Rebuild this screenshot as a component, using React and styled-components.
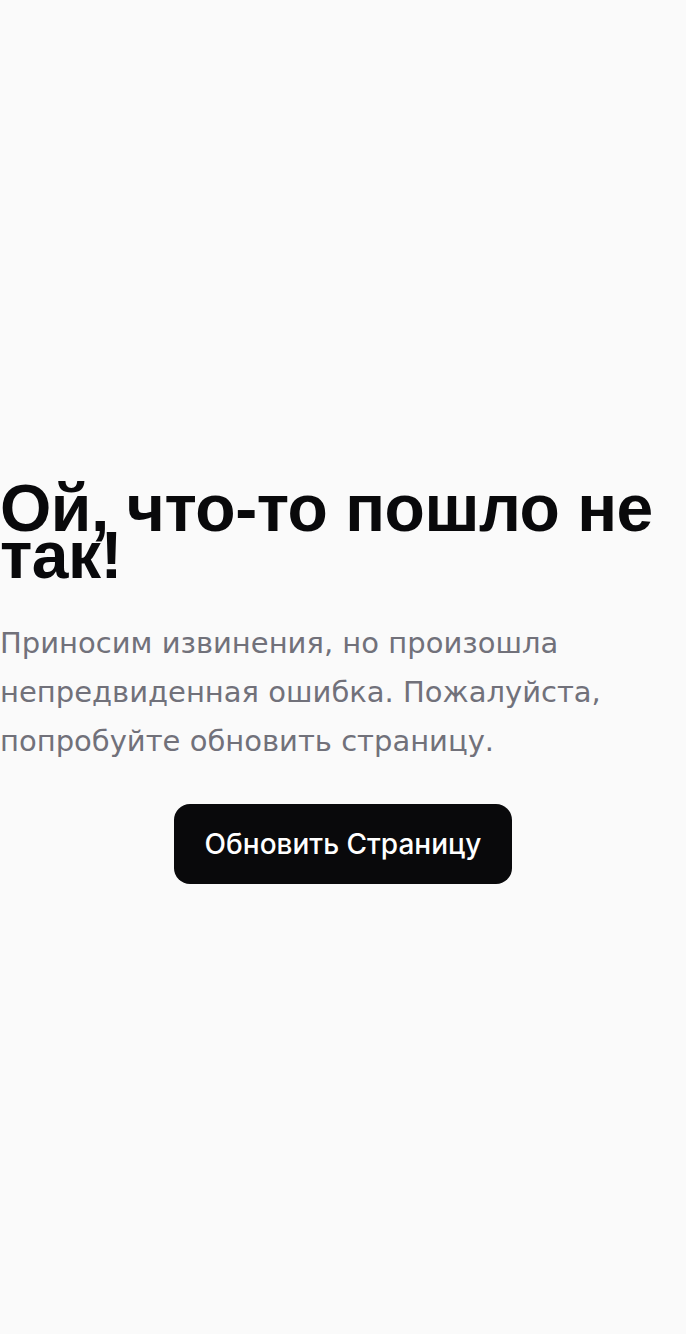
import React from "react";
import styled, { createGlobalStyle } from "styled-components";

const Global = createGlobalStyle`
  html, body { margin: 0; padding: 0; background: #fafafa; }
  #root { min-height: 100vh; }
`;

const Page = styled.main`
  min-height: 100vh;
  display: flex;
  flex-direction: column;
  justify-content: center;
  align-items: center;
  padding-top: 35px;
  background: #fafafa;
  box-sizing: border-box;
`;

const Content = styled.div`
  width: 100%;
  display: flex;
  flex-direction: column;
  align-items: stretch;
`;

const Title = styled.h1`
  margin: 0;
  font-family: "Liberation Sans", Arial, sans-serif;
  font-weight: 700;
  font-size: 66px;
  line-height: 47px;
  letter-spacing: -0.5px;
  color: #09090b;
  text-align: left;
`;

const Message = styled.p`
  margin: 40px 0 0;
  font-family: "DejaVu Sans", "Liberation Sans", sans-serif;
  font-size: 29px;
  line-height: 49px;
  color: #71717a;
`;

const Actions = styled.div`
  display: flex;
  justify-content: center;
  margin-top: 38px;
`;

const Button = styled.button`
  height: 80px;
  padding: 0 31px;
  border: none;
  border-radius: 16px;
  background: #09090b;
  color: #ffffff;
  font-family: Inter, "Noto Sans", sans-serif;
  font-weight: 500;
  font-size: 28px;
  cursor: pointer;
`;

export default function App() {
  return (
    <>
      <Global />
      <Page>
        <Content>
          <Title>Ой, что-то пошло не так!</Title>
          <Message>
            Приносим извинения, но произошла непредвиденная ошибка. Пожалуйста,
            попробуйте обновить страницу.
          </Message>
          <Actions>
            <Button onClick={() => window.location.reload()}>Обновить Страницу</Button>
          </Actions>
        </Content>
      </Page>
    </>
  );
}
